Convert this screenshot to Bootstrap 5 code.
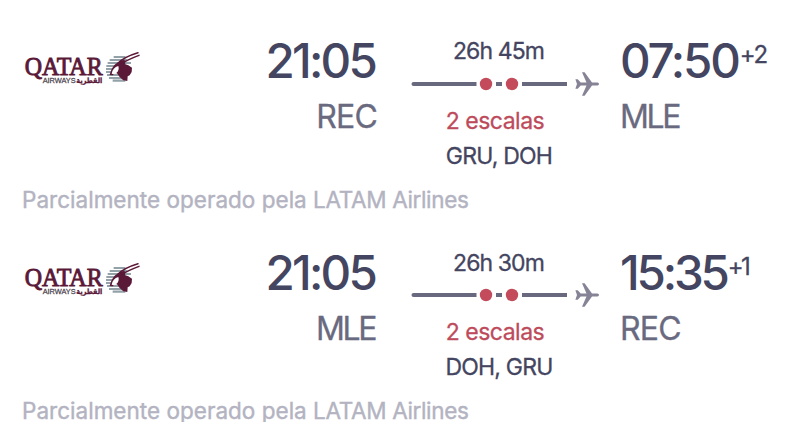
<!DOCTYPE html>
<html lang="pt-BR">
<head>
<meta charset="utf-8">
<meta name="viewport" content="width=device-width, initial-scale=1">
<title>Voos</title>
<link href="https://cdn.jsdelivr.net/npm/bootstrap@5.3.0/dist/css/bootstrap.min.css" rel="stylesheet">
<style>
body{font-family:Inter,"Noto Sans",sans-serif;color:#444560;background:#fff;overflow:hidden;white-space:nowrap}
.leg{height:211px;padding-left:16px}
.leg+.leg .when{padding-top:37px}
.leg+.leg .duration{margin-top:1px;margin-bottom:-1px}
.carrier{width:134px;padding-top:40px}
.when{padding-top:36px}
.departure{width:227px}
.route{width:190px;margin-left:34px;padding-top:36px}
.arrival{padding-left:19px}
.clock{font-size:47.5px;line-height:50px;font-weight:500;letter-spacing:-2.2px}
.departure .clock{letter-spacing:-2.8px;margin-right:2px}
.early{letter-spacing:-3.2px}
.iata{font-size:32px;line-height:32px;margin-top:15px;color:#696a80;letter-spacing:-.8px;-webkit-text-stroke:.3px #696a80}
.mle{letter-spacing:-2.4px}
.departure .mle{margin-right:2px}
.days{font-size:24px;line-height:24px;letter-spacing:-1.2px;font-weight:400;margin-top:7px;margin-left:1px;-webkit-text-stroke:.3px #444560}
.early+.days{letter-spacing:-2.5px}
.detail{width:176px;font-size:23px;line-height:30px;-webkit-text-stroke:.3px currentColor}
.duration{letter-spacing:-.9px;padding-right:1px}
.stops{color:#bd4b5b;letter-spacing:-.5px;margin-top:9px;padding-right:8px}
.via{letter-spacing:-.8px;margin-top:5px}
.operator{font-size:22.5px;line-height:30px;color:#b3b3c1;padding-left:6px;margin-top:14px;letter-spacing:.02px;-webkit-text-stroke:.4px currentColor}
.operator span{letter-spacing:-.35px}
.top-area{height:171px}
.track{margin-top:5px}
</style>
<script src="https://cdn.jsdelivr.net/npm/bootstrap@5.3.0/dist/js/bootstrap.bundle.min.js"></script>
</head>
<body>
<svg class="d-none" aria-hidden="true">
<symbol id="qatar" viewBox="0 0 402 180">
<g fill="#5b1938">
<text x="26" y="106" font-family="Liberation Serif,serif" font-size="74" textLength="234" lengthAdjust="spacingAndGlyphs" stroke="#5b1938" stroke-width="2.600">QATAR</text>
<text x="181" y="128" font-family="DejaVu Sans,sans-serif" font-size="22" font-weight="bold" textLength="78" lengthAdjust="spacingAndGlyphs" stroke="#5b1938" stroke-width="1">القطرية</text>
</g>
<text x="80" y="129" font-family="Liberation Sans,sans-serif" font-size="23" textLength="99" lengthAdjust="spacingAndGlyphs" fill="#4f4650" stroke="#4f4650" stroke-width=".8">AIRWAYS</text>
<path d="M293 51H328M281 60H334M275 69H345M271 78H310M270 87H300M270 96H300M273 105H315M279 114H324M290 122H328" stroke="#93a1a8" stroke-width="6.500" fill="none"/>
<path d="M281 105C285 91 290 77 303 69Q312 60 326 59L328 73L337 76L348 83L347 96L341 106L335 109L334 123L322 121L311 111L303 100L296 99L291 106Z" fill="#5b1938"/>
<path d="M287 101Q290 83 307 78Q311 90 301 99L294 103Z" fill="#fff"/>
<path d="M306 70Q322 51 366 38M318 70Q337 58 369 46" fill="none" stroke="#5b1938" stroke-width="4.500" stroke-linecap="round"/>
</symbol>
<symbol id="path" viewBox="0 0 190 26">
<path d="M2.500 13H65.500M85 13H91M111 13H156" stroke="#68697f" stroke-width="4"/>
<circle cx="2.500" cy="13" r="2" fill="#68697f"/>
<circle cx="75" cy="13" r="6.200" fill="#c34b5b"/><circle cx="101" cy="13" r="6.200" fill="#c34b5b"/>
<path d="M164.400 8.200H166.700L169.700 11.500H175.500L171 1.200H173.600L181 11.500H186.400Q188 11.800 188 13Q188 14.200 186.400 14.500H181L173.600 24.800H171L175.500 14.500H169.700L166.700 17.800H164.400L166 13Z" fill="#858395"/>
</symbol>
</svg>
<main>
<article class="leg">
<div class="top-area d-flex">
<div class="carrier"><svg class="d-block" width="134" height="60" role="img" aria-label="Qatar Airways"><use href="#qatar"/></svg></div>
<div class="departure when text-end"><div class="clock">21:05</div><div class="iata">REC</div></div>
<div class="route"><div class="detail duration text-center">26h 45m</div><svg class="track d-block" width="190" height="26"><use href="#path"/></svg><div class="detail stops text-center">2 escalas</div><div class="detail via text-center">GRU, DOH</div></div>
<div class="arrival when"><div class="d-flex"><div class="clock">07:50</div><div class="days">+2</div></div><div class="iata mle">MLE</div></div>
</div>
<div class="operator">Parcialmente operado pela <span>LATAM Airlines</span></div>
</article>
<article class="leg">
<div class="top-area d-flex">
<div class="carrier"><svg class="d-block" width="134" height="60" role="img" aria-label="Qatar Airways"><use href="#qatar"/></svg></div>
<div class="departure when text-end"><div class="clock">21:05</div><div class="iata mle">MLE</div></div>
<div class="route"><div class="detail duration text-center">26h 30m</div><svg class="track d-block" width="190" height="26"><use href="#path"/></svg><div class="detail stops text-center">2 escalas</div><div class="detail via text-center">DOH, GRU</div></div>
<div class="arrival when"><div class="d-flex"><div class="clock early">15:35</div><div class="days">+1</div></div><div class="iata">REC</div></div>
</div>
<div class="operator">Parcialmente operado pela <span>LATAM Airlines</span></div>
</article>
</main>
</body>
</html>
